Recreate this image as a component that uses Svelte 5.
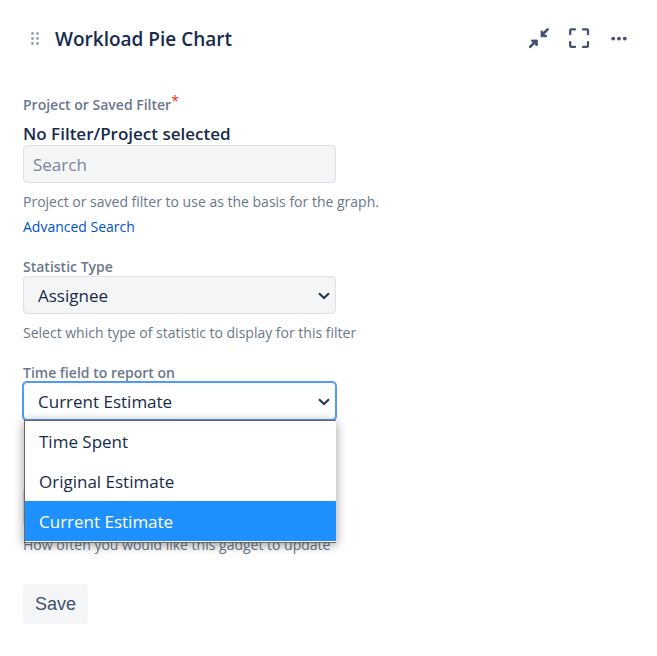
<script>
  const timeFields = ['Time Spent', 'Original Estimate', 'Current Estimate'];
  let timeField = $state('Current Estimate');
  let statistic = $state('Assignee');
  let open = $state(true);

  function choose(option) {
    timeField = option;
    open = false;
  }
</script>

{#snippet chevron()}
  <svg class="chevron" width="14" height="10" viewBox="0 0 14 10" aria-hidden="true">
    <path d="M2 2.2 L7 7 L12 2.2" fill="none" stroke="#253858" stroke-width="2.1" />
  </svg>
{/snippet}

<section class="gadget">
  <header>
    <svg class="grip" width="10" height="14" viewBox="0 0 10 14" fill="#97a0af" aria-hidden="true">
      <circle cx="2.5" cy="1.5" r="1.4" /><circle cx="7.5" cy="1.5" r="1.4" />
      <circle cx="2.5" cy="6.5" r="1.4" /><circle cx="7.5" cy="6.5" r="1.4" />
      <circle cx="2.5" cy="11.5" r="1.4" /><circle cx="7.5" cy="11.5" r="1.4" />
    </svg>
    <h1>Workload Pie Chart</h1>
    <div class="actions">
      <button type="button" aria-label="Minimize">
        <svg width="24" height="24" viewBox="0 0 24 24" fill="#42526e" stroke="#42526e" stroke-width="2.6" stroke-linecap="round" stroke-linejoin="round">
          <path d="M3.2 19.8 L8 15 M20.6 2.4 L16 7" fill="none" />
          <path d="M4.8 13 H10.4 V18.6 L8.6 18.4 V14.8 H5 Z M14 4.2 V9.8 H19.6 L19.4 8 H15.8 V4.4 Z M6.5 14 H9.5 V17 Z M15 5.8 V8.8 H18 Z" stroke-width="0.8" />
        </svg>
      </button>
      <button type="button" aria-label="Full screen">
        <svg width="24" height="24" viewBox="0 0 24 24" fill="none" stroke="#42526e" stroke-width="2.3" stroke-linecap="round" stroke-linejoin="round">
          <path d="M3.2 7.2 V3.4 Q3.2 2.3 4.3 2.3 H8 M16 2.3 H19.9 Q21 2.3 21 3.4 V7.2 M21 15.2 V18.8 Q21 19.9 19.9 19.9 H16 M8 19.9 H4.3 Q3.2 19.9 3.2 18.8 V15.2" />
        </svg>
      </button>
      <button type="button" aria-label="More">
        <svg width="24" height="24" viewBox="0 0 24 24" fill="#42526e">
          <circle cx="6.2" cy="11.6" r="1.9" /><circle cx="12" cy="11.6" r="1.9" /><circle cx="17.8" cy="11.6" r="1.9" />
        </svg>
      </button>
    </div>
  </header>

  <form onsubmit={(e) => e.preventDefault()}>
    <div class="field">
      <label class="lead" for="project">Project or Saved Filter<span class="required">*</span></label>
      <strong>No Filter/Project selected</strong>
      <input id="project" class="control" type="text" placeholder="Search" />
      <p>Project or saved filter to use as the basis for the graph.</p>
      <a href="#advanced">Advanced Search</a>
    </div>

    <div class="field">
      <label for="statistic">Statistic Type</label>
      <div class="picker">
        <select id="statistic" class="control" bind:value={statistic}>
          <option>Assignee</option>
          <option>Reporter</option>
        </select>
        {@render chevron()}
      </div>
      <p>Select which type of statistic to display for this filter</p>
    </div>

    <div class="field">
      <label for="time">Time field to report on</label>
      <div class="picker">
        <select id="time" class="control" class:active={open} bind:value={timeField}>
          {#each timeFields as option}
            <option>{option}</option>
          {/each}
        </select>
        {@render chevron()}
        {#if open}
          <div class="menu" role="listbox" aria-label="Time field to report on">
            {#each timeFields as option}
              <button
                type="button"
                role="option"
                aria-selected={option === timeField}
                class:chosen={option === timeField}
                onclick={() => choose(option)}>{option}</button>
            {/each}
          </div>
        {/if}
      </div>
    </div>

    <div class="field refresh">
      <div class="picker">
        <select class="control" aria-label="Refresh Interval">
          <option></option>
        </select>
        {@render chevron()}
      </div>
      <p>How often you would like this gadget to update</p>
    </div>

    <button class="save" type="submit">Save</button>
  </form>
</section>

<style>
  :global(body) {
    background: #fff;
  }
  .gadget {
    font-family: 'Segoe UI', 'Open Sans', 'Noto Sans', sans-serif;
    color: #172b4d;
    padding: 19px 23px 32px;
  }
  header {
    display: flex;
    align-items: center;
    height: 40px;
    padding-left: 7px;
  }
  .grip {
    flex: none;
    margin-right: 15px;
  }
  h1 {
    margin: 0;
    flex: 1;
    font-size: 19px;
    line-height: 24px;
    font-weight: 600;
  }
  .actions {
    display: flex;
    gap: 8px;
    margin-right: -1px;
  }
  .actions button {
    display: grid;
    place-items: center;
    width: 32px;
    height: 32px;
    padding: 0;
    border: 0;
    background: none;
  }
  form {
    display: flex;
    flex-direction: column;
    align-items: flex-start;
    gap: 19px;
    padding-top: 37px;
  }
  .field {
    width: 100%;
  }
  .refresh {
    margin-top: 49px;
  }
  label,
  strong {
    display: block;
  }
  label {
    font-size: 14px;
    line-height: 18px;
    font-weight: 600;
    color: #6b778c;
  }
  .lead {
    margin-bottom: 9px;
  }
  .required {
    color: #de350b;
    font-weight: 400;
    line-height: 0;
    position: relative;
    top: -4px;
  }
  strong {
    font-size: 17px;
    line-height: 22px;
    font-weight: 600;
  }
  .picker {
    position: relative;
    width: 313px;
    max-width: 100%;
  }
  .control {
    display: block;
    box-sizing: border-box;
    width: 313px;
    max-width: 100%;
    height: 38px;
    margin: 0;
    padding: 0 9px;
    border: 1px solid #dfe1e6;
    border-radius: 4px;
    background: #f4f5f7;
    color: #172b4d;
    font: 17px/24px 'Segoe UI', 'Open Sans', 'Noto Sans', sans-serif;
    outline: none;
  }
  .control::placeholder {
    color: #7a869a;
    opacity: 1;
  }
  select.control {
    appearance: none;
    padding: 2px 32px 0 14px;
  }
  .control.active {
    border-color: #4c9aff;
    box-shadow: 0 0 0 1px #4c9aff;
    background: #fff;
  }
  .chevron {
    position: absolute;
    right: 5px;
    top: 15px;
    pointer-events: none;
  }
  .menu {
    position: absolute;
    z-index: 1;
    top: 100%;
    left: 1px;
    right: 0;
    border: 1px solid #686868;
    border-right: 0;
    padding-bottom: 1px;
    background: #fff;
    box-shadow: 0 2px 10px rgba(0, 0, 0, 0.4);
  }
  .menu button {
    display: block;
    width: 100%;
    height: 40px;
    padding: 2px 14px 0;
    border: 0;
    background: #fff;
    color: #172b4d;
    font: 17px/24px 'Segoe UI', 'Open Sans', 'Noto Sans', sans-serif;
    text-align: left;
  }
  .menu .chosen {
    background: #1e90ff;
    color: #fff;
  }
  p {
    margin: 6px 0 0;
    font-size: 14px;
    line-height: 25px;
    color: #6b778c;
  }
  a {
    display: table;
    font-size: 14px;
    line-height: 25px;
    color: #0052cc;
    text-decoration: none;
  }
  .save {
    height: 40px;
    margin-top: 8px;
    padding: 0 12px;
    border: 0;
    border-radius: 4px;
    background: #f4f5f7;
    color: #42526e;
    font: 18px/24px 'Liberation Sans', sans-serif;
  }
</style>
